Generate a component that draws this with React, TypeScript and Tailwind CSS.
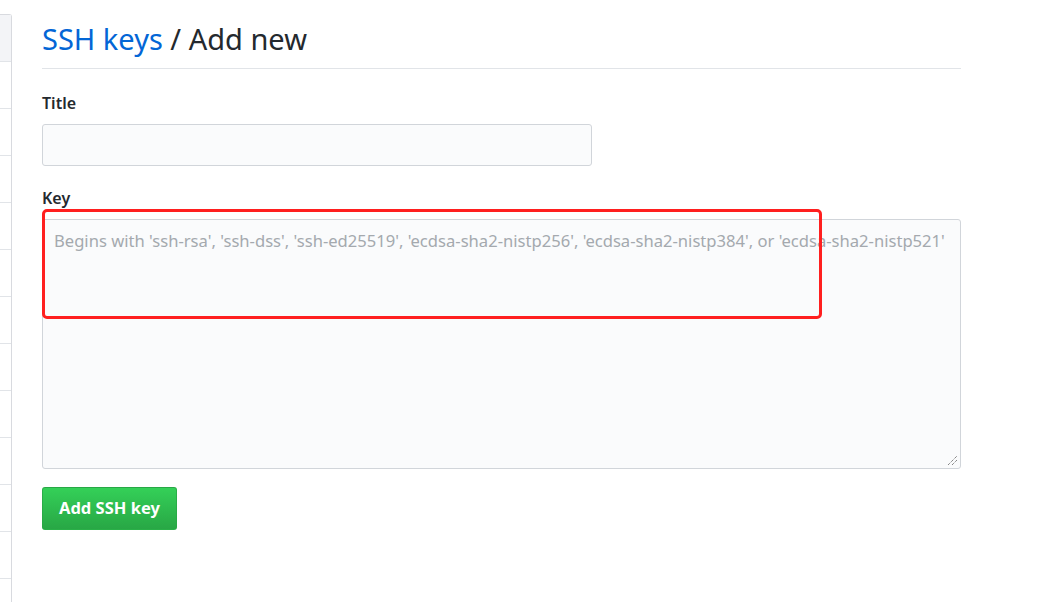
import React from "react";

export default function App() {
  const rows = [0, 1, 2, 3, 4, 5, 6, 7, 8, 9, 10, 11];
  return (
    <div className="w-[1050px] h-[602px] bg-white flex overflow-hidden" style={{ fontFamily: '"Noto Sans", "Open Sans", sans-serif' }}>
      <div className="w-[12px] mt-[14px] border-t border-r border-[#d8dadf] rounded-tr-[3px] flex flex-col shrink-0">
        <div className="h-[47px] shrink-0 bg-[#f3f4f7] border-b border-[#e1e4e8]" />
        {rows.map((r) => (
          <div key={r} className="h-[47px] border-b border-[#e1e4e8] shrink-0" />
        ))}
      </div>
      <div className="ml-[30px] w-[919px] flex flex-col">
        <div className="pt-[17px] pb-[8px] border-b border-[#e1e4e8] text-[29px] leading-[43px] text-[#24292e]">
          <span className="text-[#0366d6]">SSH keys</span> / Add new
        </div>
        <div className="mt-[24px] text-[16px] font-semibold text-[#24292e] leading-[20px]">Title</div>
        <div className="mt-[11px] w-[550px] h-[42px] bg-[#fafbfc] border border-[#d1d5da] rounded-[3px]" />
        <div className="mt-[22px] text-[16px] font-semibold text-[#24292e] leading-[20px]">Key</div>
        <div className="relative mt-[11px]">
          <div className="w-[919px] h-[250px] bg-[#fafbfc] border border-[#d1d5da] rounded-[3px] px-[11px] pt-[10px] text-[16.6px] text-[#a4a9ae] leading-[22px] whitespace-nowrap relative">
            Begins with 'ssh-rsa', 'ssh-dss', 'ssh-ed25519', 'ecdsa-sha2-nistp256', 'ecdsa-sha2-nistp384', or 'ecdsa-sha2-nistp521'
            <svg className="absolute right-[2px] bottom-[2px]" width="11" height="11" viewBox="0 0 11 11">
              <line x1="1" y1="10" x2="10" y2="1" stroke="#555" strokeWidth="1" strokeDasharray="1 1" />
              <line x1="5" y1="10" x2="10" y2="5" stroke="#555" strokeWidth="1" strokeDasharray="1 1" />
            </svg>
          </div>
          <div className="absolute left-0 top-[-10px] w-[780px] h-[110px] border-[3px] border-[#ff1f1f] rounded-[5px]" />
        </div>
        <div className="mt-[18px]">
          <button className="h-[43px] px-[16px] rounded-[3px] border border-[#28a745]/80 bg-gradient-to-b from-[#34d058] to-[#28a745] text-white font-bold text-[16.5px]">
            Add SSH key
          </button>
        </div>
      </div>
    </div>
  );
}
